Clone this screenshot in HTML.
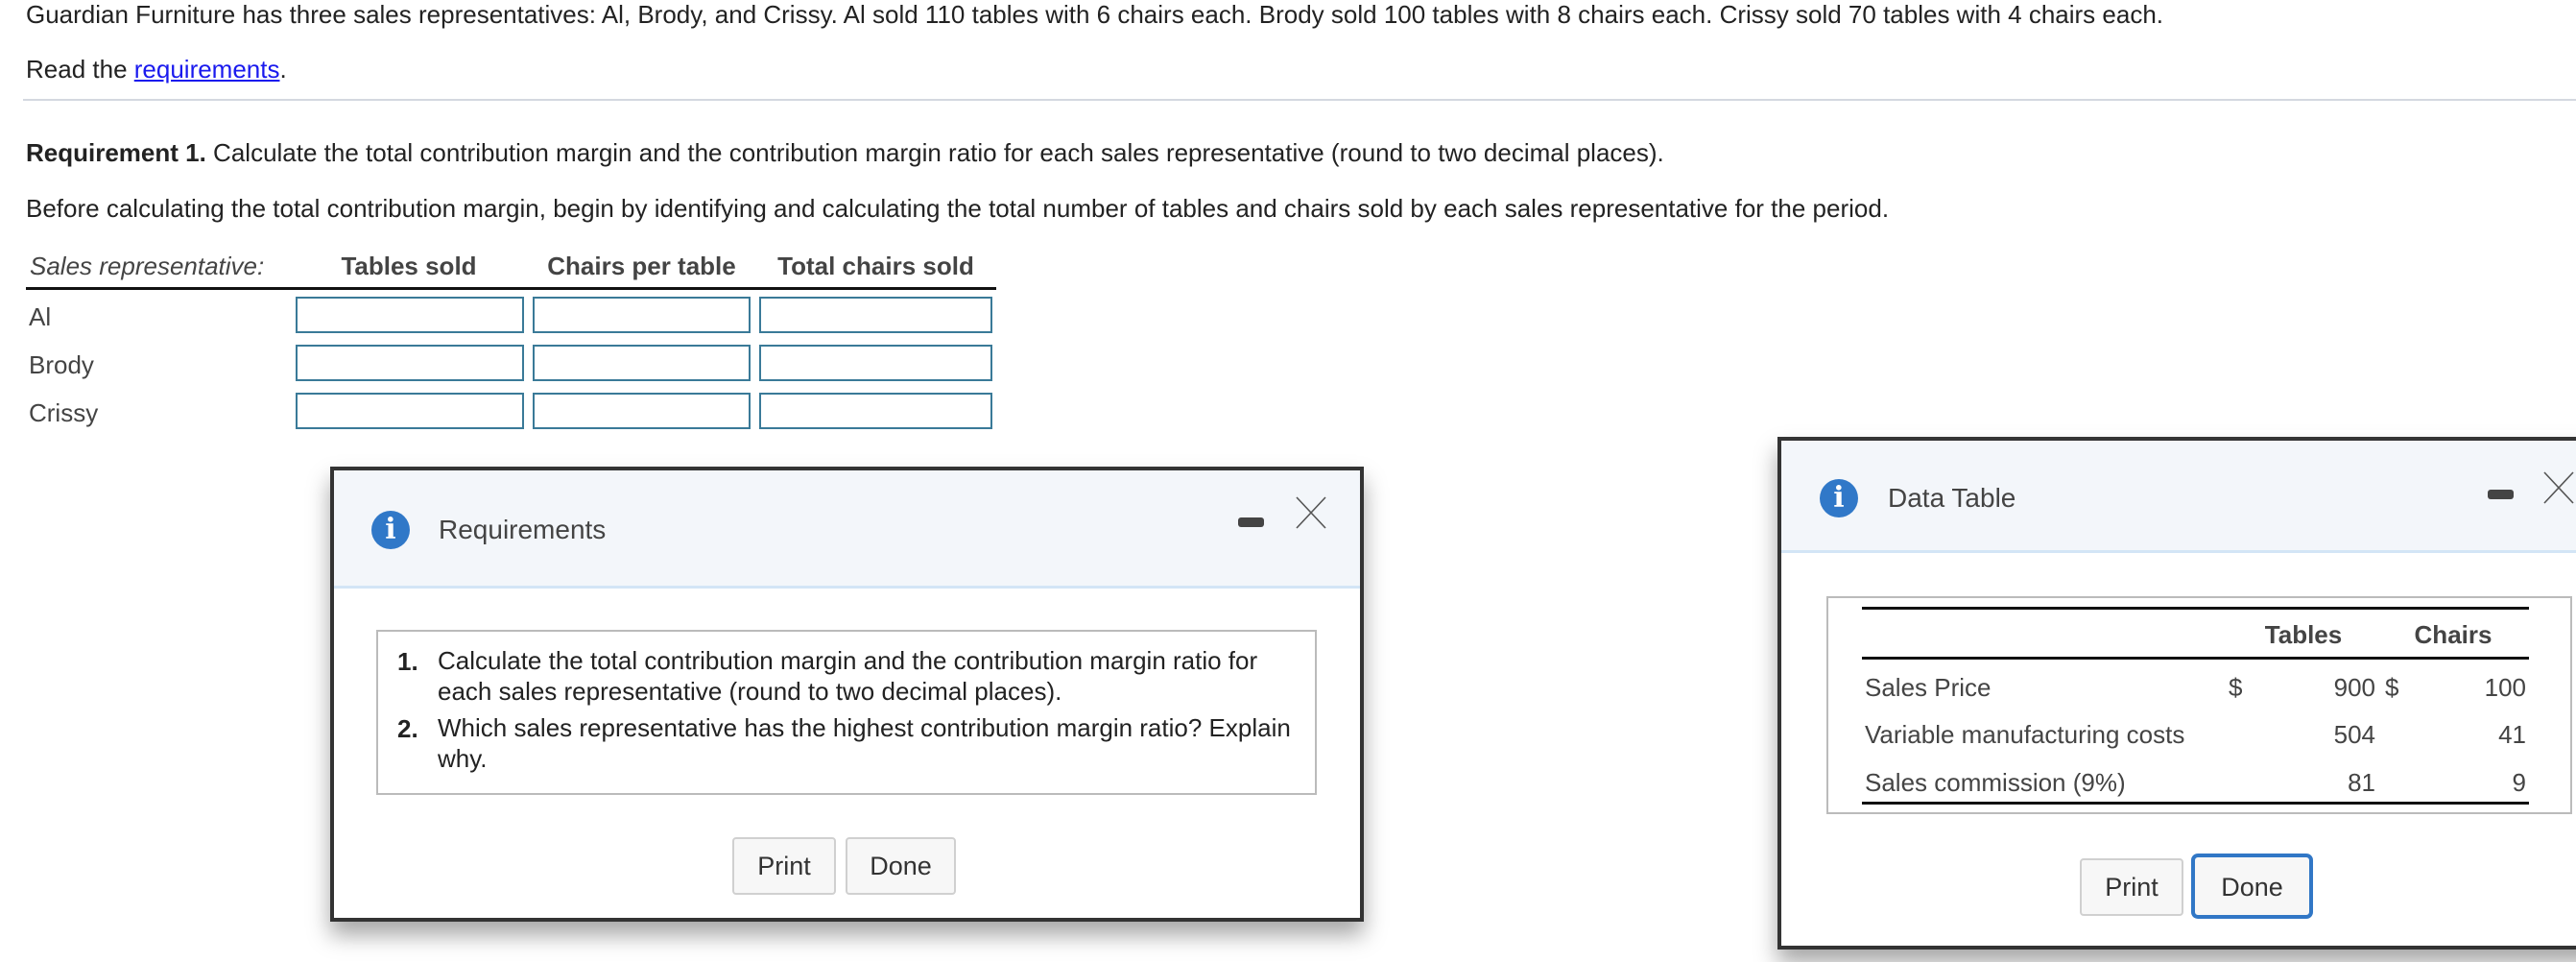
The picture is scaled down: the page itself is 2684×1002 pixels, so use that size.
<!DOCTYPE html>
<html><head><meta charset="utf-8"><style>
*{margin:0;padding:0;box-sizing:border-box}
body{width:2684px;height:1002px;background:#fff;font-family:"Liberation Sans",Arial,sans-serif;color:#222;position:relative;overflow:hidden;font-size:26px}
.a{position:absolute;white-space:nowrap;line-height:1}
.box{position:absolute;border:2px solid #3a7a98;background:#fff}
.modal{position:absolute;background:#fff;border:4px solid #333;box-shadow:0 14px 22px rgba(0,0,0,.35)}
.hdr{position:absolute;left:0;right:0;top:0;background:#f3f6fa;border-bottom:3px solid #d3e5f6}
.icon{position:absolute;border-radius:50%;background:#3078c8;color:#fff;font-family:"DejaVu Serif",serif;font-weight:bold;text-align:center}
.min{position:absolute;background:#444;border-radius:3px}
.btn{position:absolute;border:2px solid #d0d0d0;border-radius:4px;background:#f7f7f7;color:#333;text-align:center;font-size:27px}
.line{position:absolute;background:#111}
.c{text-align:center}
</style></head><body>
<div class="a" style="left:27px;top:2px">Guardian Furniture has three sales representatives: Al, Brody, and Crissy. Al sold 110 tables with 6 chairs each. Brody sold 100 tables with 8 chairs each. Crissy sold 70 tables with 4 chairs each.</div>
<div class="a" style="left:27px;top:59px">Read the <span style="color:#1a1aee;text-decoration:underline">requirements</span>.</div>
<div style="position:absolute;left:24px;right:0;top:103px;height:2px;background:#d4d8e0"></div>
<div class="a" style="left:27px;top:146px"><b>Requirement 1.</b> Calculate the total contribution margin and the contribution margin ratio for each sales representative (round to two decimal places).</div>
<div class="a" style="left:27px;top:204px">Before calculating the total contribution margin, begin by identifying and calculating the total number of tables and chairs sold by each sales representative for the period.</div>
<div class="a" style="left:31px;top:264px;font-style:italic;color:#444">Sales representative:</div>
<div class="a c" style="left:300px;width:252px;top:264px;font-weight:bold;color:#444">Tables sold</div>
<div class="a c" style="left:555px;width:227px;top:264px;font-weight:bold;color:#444">Chairs per table</div>
<div class="a c" style="left:791px;width:243px;top:264px;font-weight:bold;color:#444">Total chairs sold</div>
<div class="line" style="left:27px;top:299px;width:1011px;height:3px"></div>
<div class="a" style="left:30px;top:317px;color:#444">Al</div>
<div class="a" style="left:30px;top:367px;color:#444">Brody</div>
<div class="a" style="left:30px;top:417px;color:#444">Crissy</div>
<div class="box" style="left:308px;top:309px;width:238px;height:38px"></div>
<div class="box" style="left:555px;top:309px;width:227px;height:38px"></div>
<div class="box" style="left:791px;top:309px;width:243px;height:38px"></div>
<div class="box" style="left:308px;top:359px;width:238px;height:38px"></div>
<div class="box" style="left:555px;top:359px;width:227px;height:38px"></div>
<div class="box" style="left:791px;top:359px;width:243px;height:38px"></div>
<div class="box" style="left:308px;top:409px;width:238px;height:38px"></div>
<div class="box" style="left:555px;top:409px;width:227px;height:38px"></div>
<div class="box" style="left:791px;top:409px;width:243px;height:38px"></div>

<div class="modal" style="left:344px;top:486px;width:1077px;height:474px">
 <div class="hdr" style="height:123px"></div>
 <div class="icon" style="left:39px;top:42px;width:40px;height:40px;font-size:30px;line-height:40px">i</div>
 <div class="a" style="left:109px;top:48px;font-size:28px;color:#444">Requirements</div>
 <div class="min" style="left:942px;top:49px;width:27px;height:10px"></div>
 <svg style="position:absolute;left:1002px;top:27px" width="32" height="34"><path d="M1 1L31 33M31 1L1 33" stroke="#555" stroke-width="1.6" fill="none"/></svg>
 <div style="position:absolute;left:44px;top:166px;width:980px;height:172px;border:2px solid #bbb"></div>
 <div class="a" style="left:66px;top:186px;font-weight:bold">1.</div>
 <div style="position:absolute;left:108px;top:182px;width:900px;line-height:32px">Calculate the total contribution margin and the contribution margin ratio for each sales representative (round to two decimal places).</div>
 <div class="a" style="left:66px;top:256px;font-weight:bold">2.</div>
 <div style="position:absolute;left:108px;top:252px;width:900px;line-height:32px">Which sales representative has the highest contribution margin ratio? Explain why.</div>
 <div class="btn" style="left:415px;top:382px;width:108px;height:60px;line-height:56px">Print</div>
 <div class="btn" style="left:533px;top:382px;width:115px;height:60px;line-height:56px">Done</div>
</div>

<div class="modal" style="left:1852px;top:455px;width:900px;height:534px">
 <div class="hdr" style="height:117px"></div>
 <div class="icon" style="left:40px;top:40px;width:40px;height:40px;font-size:30px;line-height:40px">i</div>
 <div class="a" style="left:111px;top:46px;font-size:28px;color:#444">Data Table</div>
 <div class="min" style="left:736px;top:51px;width:27px;height:10px"></div>
 <svg style="position:absolute;left:794px;top:32px" width="32" height="34"><path d="M1 1L31 33M31 1L1 33" stroke="#555" stroke-width="1.6" fill="none"/></svg>
</div>
<div style="position:absolute;left:1903px;top:621px;width:777px;height:227px;border:2px solid #bbb"></div>
<div class="line" style="left:1940px;top:632px;width:695px;height:3px"></div>
<div class="a c" style="left:2340px;width:120px;top:648px;font-weight:bold;color:#444">Tables</div>
<div class="a c" style="left:2496px;width:120px;top:648px;font-weight:bold;color:#444">Chairs</div>
<div class="line" style="left:1940px;top:684px;width:695px;height:3px"></div>
<div class="a" style="left:1943px;top:703px;color:#444">Sales Price</div>
<div class="a" style="left:2322px;top:703px;color:#444">$</div>
<div class="a" style="left:2300px;width:175px;text-align:right;top:703px;color:#444">900</div>
<div class="a" style="left:2485px;top:703px;color:#444">$</div>
<div class="a" style="left:2500px;width:132px;text-align:right;top:703px;color:#444">100</div>
<div class="a" style="left:1943px;top:752px;color:#444">Variable manufacturing costs</div>
<div class="a" style="left:2300px;width:175px;text-align:right;top:752px;color:#444">504</div>
<div class="a" style="left:2500px;width:132px;text-align:right;top:752px;color:#444">41</div>
<div class="a" style="left:1943px;top:802px;color:#444">Sales commission (9%)</div>
<div class="a" style="left:2300px;width:175px;text-align:right;top:802px;color:#444">81</div>
<div class="a" style="left:2500px;width:132px;text-align:right;top:802px;color:#444">9</div>
<div class="line" style="left:1940px;top:835px;width:695px;height:3px"></div>
<div class="btn" style="left:2167px;top:894px;width:108px;height:60px;line-height:56px">Print</div>
<div class="btn" style="left:2283px;top:889px;width:127px;height:68px;line-height:62px;border:4px solid #3177c6;border-radius:7px">Done</div>
</body></html>
